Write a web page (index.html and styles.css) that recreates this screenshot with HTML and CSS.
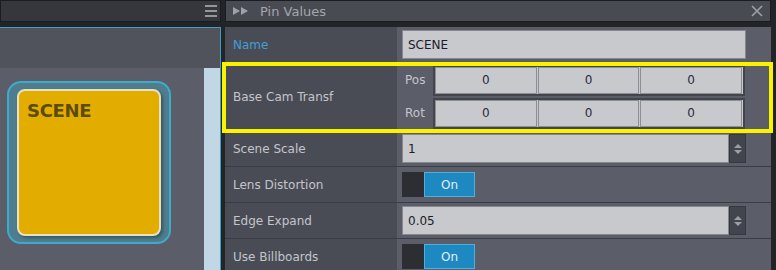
FILE: index.html
```html
<!DOCTYPE html>
<html lang="en">
<head>
    <meta charset="UTF-8">
    <title>Pin Values</title>
    <link rel="stylesheet" href="styles.css">
</head>
<body>
    <div class="app">
        <section class="graph">
            <div class="bar graph-bar">
                <span class="menu"><i></i><i></i><i></i></span>
            </div>
            <div class="canvas">
                <div class="canvas-top"></div>
                <div class="canvas-body">
                    <div class="node">
                        <div class="node-card">SCENE</div>
                    </div>
                    <div class="scroll"></div>
                </div>
            </div>
        </section>

        <section class="pins">
            <div class="bar pins-bar">
                <svg class="ff" width="16" height="8" viewBox="0 0 16 8"><polygon points="0,0 7,4 0,8"/><polygon points="8,0 15,4 8,8"/></svg>
                <span class="title">Pin Values</span>
                <svg class="close" width="12" height="12" viewBox="0 0 12 12"><path d="M1 1 L11 11 M11 1 L1 11"/></svg>
            </div>

            <div class="props">
                <div class="row row-name">
                    <div class="label label-active">Name</div>
                    <div class="value"><div class="field">SCENE</div></div>
                </div>
                <div class="row row-vec">
                    <div class="label">Base Cam Transf</div>
                    <div class="value vec-value">
                        <div class="vec-line">
                            <span class="vec-label">Pos</span>
                            <div class="vec">
                                <div class="vec-cell">0</div>
                                <div class="vec-cell">0</div>
                                <div class="vec-cell">0</div>
                            </div>
                        </div>
                        <div class="vec-line">
                            <span class="vec-label">Rot</span>
                            <div class="vec">
                                <div class="vec-cell">0</div>
                                <div class="vec-cell">0</div>
                                <div class="vec-cell">0</div>
                            </div>
                        </div>
                    </div>
                </div>
                <div class="row">
                    <div class="label">Scene Scale</div>
                    <div class="value">
                        <div class="field field-num">1</div>
                        <div class="spin"><svg width="10" height="12" viewBox="0 0 10 12"><polygon points="1,5 5,1 9,5"/><polygon points="1,7 5,11 9,7"/></svg></div>
                    </div>
                </div>
                <div class="row">
                    <div class="label">Lens Distortion</div>
                    <div class="value">
                        <div class="toggle"><span class="toggle-off"></span><span class="toggle-on">On</span></div>
                    </div>
                </div>
                <div class="row">
                    <div class="label">Edge Expand</div>
                    <div class="value">
                        <div class="field field-num">0.05</div>
                        <div class="spin"><svg width="10" height="12" viewBox="0 0 10 12"><polygon points="1,5 5,1 9,5"/><polygon points="1,7 5,11 9,7"/></svg></div>
                    </div>
                </div>
                <div class="row">
                    <div class="label">Use Billboards</div>
                    <div class="value">
                        <div class="toggle"><span class="toggle-off"></span><span class="toggle-on">On</span></div>
                    </div>
                </div>
            </div>

            <div class="highlight"></div>
        </section>
    </div>
</body>
</html>
```

FILE: styles.css
```css
body {
    margin: 0;
    background-color: #232428;
    font-family: "DejaVu Sans", Verdana, sans-serif;
    font-size: 12px;
    color: #c3c5cb;
    overflow: hidden;
}
.app {
    display: flex;
    gap: 4px;
    height: 270px;
}
.bar {
    height: 22px;
    box-sizing: border-box;
    border: 1px solid #1b1c1f;
    display: flex;
    align-items: center;
    flex-shrink: 0;
}

/* left: graph */
.graph {
    width: 221px;
    display: flex;
    flex-direction: column;
    gap: 5px;
}
.graph-bar {
    background-color: #36373d;
    justify-content: flex-end;
    padding-right: 3px;
}
.menu {
    display: flex;
    flex-direction: column;
    gap: 3px;
}
.menu i {
    display: block;
    width: 12px;
    height: 2px;
    background-color: #94969c;
}
.canvas {
    flex: 1;
    border-top: 1px solid #3c9ec2;
    border-right: 1px solid #3c9ec2;
    display: flex;
    flex-direction: column;
}
.canvas-top {
    height: 40px;
    background-color: #50525c;
}
.canvas-body {
    flex: 1;
    display: flex;
    background-color: #5b5d69;
}
.node {
    width: 164px;
    height: 163px;
    box-sizing: border-box;
    margin: 13px 0 0 7px;
    padding: 6px 8px;
    border: 2px solid #40aacb;
    border-radius: 14px;
    background-color: #4d7d8e;
}
.node-card {
    height: 100%;
    box-sizing: border-box;
    padding: 9px 8px;
    background-color: #e3ad00;
    border: 2px solid #e9dfc2;
    border-radius: 8px;
    box-shadow: 2px 2px 3px rgba(0, 0, 0, 0.3);
    color: #5b4b06;
    font-size: 18px;
    font-weight: bold;
    letter-spacing: -0.3px;
}
.scroll {
    width: 16px;
    margin-left: auto;
    background-color: #c2d7e6;
}

/* right: pin values */
.pins {
    width: 546px;
    position: relative;
    display: flex;
    flex-direction: column;
    gap: 5px;
}
.pins-bar {
    background-color: #494b53;
    padding: 0 6px;
}
.ff {
    fill: #9ea0a6;
    margin-left: 1px;
}
.title {
    margin-left: 11px;
    margin-top: 1px;
    color: #a3a6ad;
    font-size: 13px;
}
.close {
    margin-left: auto;
    margin-right: 1px;
    stroke: #9ea0a6;
    stroke-width: 1.6;
}
.props {
    flex: 1;
    display: flex;
    flex-direction: column;
    background-color: #5b5e69;
}
.row {
    display: flex;
    height: 35px;
    border-bottom: 1px solid #3b3d44;
    flex-shrink: 0;
}
.row-vec {
    height: 67px;
}
.label {
    width: 164px;
    padding-left: 8px;
    background-color: #4a4c55;
    display: flex;
    align-items: center;
    flex-shrink: 0;
}
.label-active {
    color: #3f9fd6;
}
.value {
    flex: 1;
    display: flex;
    align-items: center;
    padding: 0 25px 0 5px;
}
.field {
    flex: 1;
    height: 29px;
    box-sizing: border-box;
    display: flex;
    align-items: center;
    padding-left: 5px;
    background-color: #c8c9cd;
    border: 1px solid #85878d;
    color: #1c1c28;
}
.spin {
    width: 17px;
    height: 29px;
    box-sizing: border-box;
    display: flex;
    align-items: center;
    justify-content: center;
    background-color: #42444e;
    border: 1px solid #363840;
}
.spin svg {
    fill: #9c9ea5;
}

/* vector rows */
.vec-value {
    flex-direction: column;
    justify-content: center;
    align-items: stretch;
    gap: 2px;
    padding: 0 26px 0 0;
}
.vec-line {
    display: flex;
    align-items: center;
}
.vec-label {
    width: 28px;
    padding-left: 8px;
}
.vec {
    flex: 1;
    display: flex;
    border: 2px solid #43454d;
    background-color: #c8c9cd;
}
.vec-cell {
    flex: 1;
    height: 25px;
    margin: 0 1px 0 0;
    border: 1px solid #8d8e93;
    display: flex;
    align-items: center;
    justify-content: center;
    color: #2a2a3a;
}

/* toggle */
.toggle {
    display: flex;
    height: 25px;
}
.toggle-off {
    width: 22px;
    background-color: #2d2e33;
}
.toggle-on {
    width: 49px;
    display: flex;
    align-items: center;
    justify-content: center;
    background-color: #1e88c0;
    border: 1px solid #4fb0e0;
    color: #e6eef5;
}

.highlight {
    position: absolute;
    left: -3px;
    top: 62px;
    width: 551px;
    height: 71px;
    box-sizing: border-box;
    border: 4px solid #fbf200;
}
```
